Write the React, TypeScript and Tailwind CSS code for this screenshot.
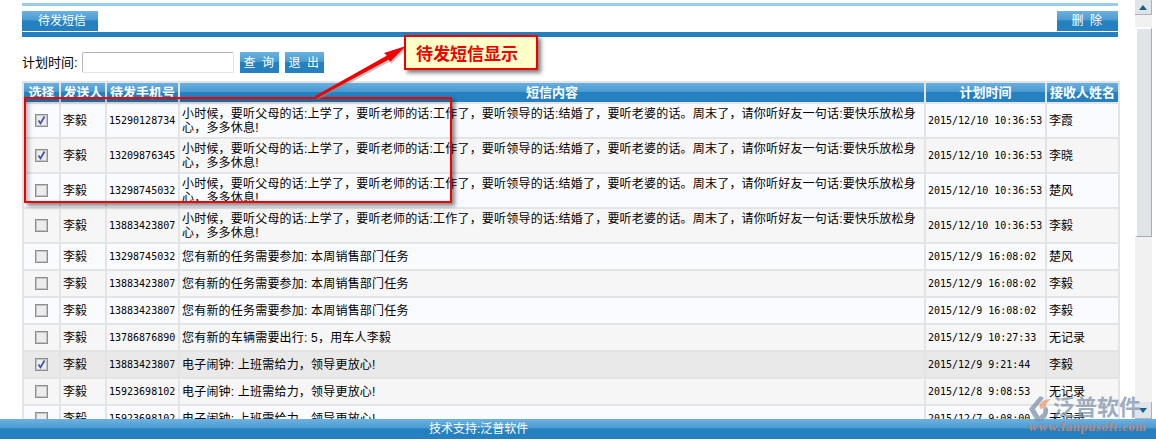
const baseFont = "font-['Liberation_Sans','Noto_Sans_CJK_SC',sans-serif]";
const monoFont = "font-['DejaVu_Sans_Mono',monospace] text-[10px]";

const LONG_TEXT =
  "小时候，要听父母的话:上学了，要听老师的话:工作了，要听领导的话:结婚了，要听老婆的话。周末了，请你听好友一句话:要快乐放松身心，多多休息!";
const TASK_TEXT = "您有新的任务需要参加: 本周销售部门任务";
const CLOCK_TEXT = "电子闹钟: 上班需给力，领导更放心!";

const rows = [
  { checked: true, phone: "15290128734", text: LONG_TEXT, time: "2015/12/10 10:36:53", name: "李霞", tall: true },
  { checked: true, phone: "13209876345", text: LONG_TEXT, time: "2015/12/10 10:36:53", name: "李晓", tall: true },
  { checked: false, phone: "13298745032", text: LONG_TEXT, time: "2015/12/10 10:36:53", name: "楚风", tall: true },
  { checked: false, phone: "13883423807", text: LONG_TEXT, time: "2015/12/10 10:36:53", name: "李毅", tall: true },
  { checked: false, phone: "13298745032", text: TASK_TEXT, time: "2015/12/9 16:08:02", name: "楚风" },
  { checked: false, phone: "13883423807", text: TASK_TEXT, time: "2015/12/9 16:08:02", name: "李毅" },
  { checked: false, phone: "13883423807", text: TASK_TEXT, time: "2015/12/9 16:08:02", name: "李毅" },
  { checked: false, phone: "13786876890", text: "您有新的车辆需要出行: 5，用车人李毅", time: "2015/12/9 10:27:33", name: "无记录" },
  { checked: true, phone: "13883423807", text: CLOCK_TEXT, time: "2015/12/9 9:21:44", name: "李毅", active: true },
  { checked: false, phone: "15923698102", text: CLOCK_TEXT, time: "2015/12/8 9:08:53", name: "无记录" },
  { checked: false, phone: "15923698102", text: CLOCK_TEXT, time: "2015/12/7 9:08:00", name: "无记录" },
];

const headers = ["选择", "发送人", "待发手机号", "短信内容", "计划时间", "接收人姓名"];
const barGradient = "bg-[linear-gradient(#6db1e0,#4a9bd2_45%,#2480bf_50%,#2480bf)]";

function CheckBox({ checked }: { checked: boolean }) {
  return (
    <span className="mx-auto flex h-[13px] w-[13px] items-center justify-center border border-[#8f8f8f] bg-[#ececec] shadow-[inset_0_0_0_1px_#c4c4c4]">
      {checked && (
        <svg viewBox="0 0 11 11" className="h-[11px] w-[11px]">
          <path d="M2.5 5.5 L4.5 8.5 L8.5 1.5" fill="none" stroke="#3f4fa8" strokeWidth="1.7" />
        </svg>
      )}
    </span>
  );
}

function Scrollbar() {
  return (
    <div className="flex h-[419px] w-[17px] flex-col bg-[#f0f0f0]">
      <div className="flex h-[15px] items-center justify-center border-r border-b border-[#a9b4ba] bg-[#dfe4e8]">
        <span className="h-0 w-0 border-x-[4px] border-b-[5px] border-x-transparent border-b-[#15608f]" />
      </div>
      <div className="mt-[12px] h-[210px] border-t-2 border-r border-b border-l-2 border-t-white border-r-[#a0b0b8] border-b-[#a0b0b8] border-l-white bg-[#dfe4e8]" />
      <div className="flex-1" />
      <div className="flex h-[17px] items-center justify-center border-r border-b border-[#a9b4ba] bg-[#dfe4e8]">
        <span className="h-0 w-0 border-x-[4px] border-t-[5px] border-x-transparent border-t-[#15608f]" />
      </div>
    </div>
  );
}

function Watermark() {
  return (
    <div className="absolute top-[396px] left-[1028px] flex w-[124px] flex-col">
      <div className="flex h-[24px] items-start opacity-75">
        <svg viewBox="0 0 24 26" className="h-[26px] w-[24px] shrink-0">
          <path d="M12 0 L1 13 L8 25 L14 25 L7 13 L16 2 Z" fill="#7d93ad" />
          <path d="M23 3 C15 3 10 7 12 13 L18 12 C17 9 19 6 23 3 Z" fill="#ec9c72" />
          <path d="M19 11 C22 16 19 21 14 25 L11 20 C15 18 16 16 15 13 Z" fill="#7d93ad" />
        </svg>
        <span className="ml-px text-[22px] leading-[24px] font-bold whitespace-nowrap text-[#8093ac]">泛普软件</span>
      </div>
      <span className="font-['Liberation_Serif',serif] text-[13px] leading-[14px] font-bold tracking-[0.5px] whitespace-nowrap text-[#b9857c]">
        www.fanpusoft.com
      </span>
    </div>
  );
}

function App() {
  return (
    <div className={`relative flex h-[441px] w-[1156px] overflow-hidden bg-white text-[12px] text-black ${baseFont}`}>
      <main className="ml-[22px] w-[1096px] shrink-0 pt-[3px]">
        <div className="h-[3px] bg-[#9ac9ee]" />
        <div className="mt-[5px] flex h-[20px] justify-between">
          <div className={`flex w-[76px] items-center justify-center pl-[4px] text-[12px] text-white ${barGradient}`}>待发短信</div>
          <div className={`flex w-[61px] items-center justify-center text-[12px] tracking-[1.5px] text-white ${barGradient}`}>删 除</div>
        </div>
        <div className="mt-px h-[5px] bg-[#2480bf]" />

        <div className="mt-[15px] flex h-[21px] items-center">
          <span className="w-[60px] text-[13px]">计划时间:</span>
          <input className="h-[21px] w-[152px] rounded-[2px] border border-[#b4b4c4] border-r-[#dfe3ea] border-b-[#dfe3ea] bg-white" />
          <button className={`ml-[6px] h-[21px] w-[39px] text-[12px] tracking-[1.5px] text-white ${barGradient}`}>查 询</button>
          <button className={`ml-[6px] h-[21px] w-[39px] text-[12px] tracking-[1.5px] text-white ${barGradient}`}>退 出</button>
        </div>

        <table className="mt-[8px] w-[1096px] table-fixed border-collapse">
          <colgroup>
            <col className="w-[37px]" />
            <col className="w-[46px]" />
            <col className="w-[73px]" />
            <col className="w-[746px]" />
            <col className="w-[121px]" />
            <col className="w-[73px]" />
          </colgroup>
          <thead>
            <tr className={`h-[21px] ${barGradient}`}>
              {headers.map((h) => (
                <th key={h} className="border-2 border-[#e2e4e6] p-0 text-center text-[13px] leading-[17px] font-bold whitespace-nowrap text-white">
                  {h}
                </th>
              ))}
            </tr>
          </thead>
          <tbody>
            {rows.map((r, i) => {
              const rowBg = r.active ? "bg-[#e9e9e9]" : i % 2 === 0 ? "bg-[#fafbff]" : "bg-[#f6f6f6]";
              return (
                <tr key={i} className={`${r.tall ? "h-[35px]" : "h-[27px]"} ${rowBg}`}>
                  <td className="border-2 border-[#e2e4e6] p-0"><CheckBox checked={r.checked} /></td>
                  <td className="border-2 border-[#e2e4e6] p-0 pl-[2px] text-[12px]">李毅</td>
                  <td className={`border-2 border-[#e2e4e6] p-0 pl-[2px] ${monoFont}`}>{r.phone}</td>
                  <td className="border-2 border-[#e2e4e6] p-0 pl-[2px] text-[12px] leading-[14px] tracking-[0.2px]">{r.text}</td>
                  <td className={`border-2 border-[#e2e4e6] p-0 pl-[2px] whitespace-nowrap ${monoFont}`}>{r.time}</td>
                  <td className="border-2 border-[#e2e4e6] p-0 pl-[2px] text-[12px]">{r.name}</td>
                </tr>
              );
            })}
          </tbody>
        </table>
      </main>

      <aside className="ml-[17px] shrink-0">
        <Scrollbar />
      </aside>

      {/* annotation layer */}
      <div className="absolute top-[97px] left-[24px] h-[106px] w-[428px] border-[2px] border-[#f00000] shadow-[3px_3px_4px_rgba(0,0,0,0.45),inset_3px_3px_4px_rgba(0,0,0,0.25)]" />
      <svg className="absolute top-0 left-0 h-[441px] w-[1156px]" viewBox="0 0 1156 441">
        <path d="M315 96 L387 55.5 L384 53 L406 46 L390 62 L389 59.5 L317 98 Z" fill="#8a8a8a" opacity="0.5" transform="translate(1 2)" />
        <path d="M315 96 L387 55.5 L384 53 L406 46 L390 62 L389 59.5 L317 98 Z" fill="#f00000" />
      </svg>
      <div className="absolute top-[35px] left-[404px] flex h-[35px] w-[134px] items-center justify-center border-[2px] border-[#f00000] bg-[#ffffc8] pr-[8px] font-['Noto_Sans_CJK_SC',sans-serif] text-[17px] font-bold text-[#f00000] shadow-[3px_3px_4px_rgba(0,0,0,0.5)]">
        待发短信显示
      </div>

      <footer className={`absolute bottom-[2px] left-0 flex h-[20px] w-[1156px] items-center pl-[429px] text-[12px] text-white ${barGradient}`}>
        技术支持:泛普软件
      </footer>
      <Watermark />
    </div>
  );
}

export default App;
